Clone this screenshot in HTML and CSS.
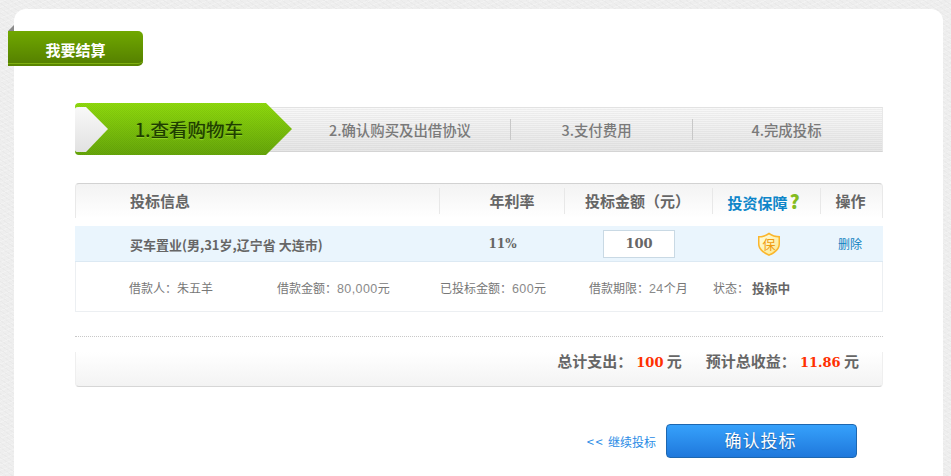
FILE: index.html
```html
<!DOCTYPE html>
<html lang="zh">
<head>
<meta charset="utf-8">
<title>我要结算</title>
<link rel="stylesheet" href="styles.css">
</head>
<body>
<main class="card">
  <h1 class="ribbon">我要结算</h1>
  <div class="content">
    <ol class="steps">
      <li class="step-active">
        <svg class="arrow" width="217" height="52" viewBox="0 0 217 52" aria-hidden="true">
          <defs>
            <linearGradient id="g" x1="0" y1="0" x2="0" y2="1">
              <stop offset="0" stop-color="#8fdb0d"/>
              <stop offset="1" stop-color="#66a60a"/>
            </linearGradient>
            <linearGradient id="w" x1="0" y1="0" x2="0" y2="1">
              <stop offset="0" stop-color="#f8f8f8"/>
              <stop offset="1" stop-color="#e2e2e2"/>
            </linearGradient>
            <pattern id="hatch" width="2" height="2" patternUnits="userSpaceOnUse">
              <rect width="1" height="1" fill="#000" fill-opacity=".05"/>
              <rect x="1" y="1" width="1" height="1" fill="#000" fill-opacity=".05"/>
            </pattern>
          </defs>
          <path d="M4 0H191L217 26 191 52H4Q0 52 0 48V4Q0 0 4 0Z" fill="url(#g)"/>
          <path d="M4 0H191L217 26 191 52H4Q0 52 0 48V4Q0 0 4 0Z" fill="url(#hatch)"/>
          <path d="M0 6Q0 4 3 4H11L33 26 11 49H3Q0 49 0 47Z" fill="url(#w)"/>
        </svg>
        <span class="step-active-text">1.查看购物车</span>
      </li>
      <li class="step step-2">2.确认购买及出借协议</li>
      <li class="step step-3">3.支付费用</li>
      <li class="step step-4">4.完成投标</li>
    </ol>

    <section class="table">
      <div class="thead">
        <div class="th th-info">投标信息</div>
        <div class="th th-rate">年利率</div>
        <div class="th th-amount">投标金额（元）</div>
        <div class="th th-guard">投资保障<b class="q">?</b></div>
        <div class="th th-op">操作</div>
      </div>
      <div class="row">
        <div class="cell-info">买车置业(男,31岁,辽宁省 大连市)</div>
        <div class="cell-rate">11%</div>
        <div class="cell-amount"><input class="amount" value="100" aria-label="投标金额"></div>
        <div class="cell-guard">
          <svg width="24" height="26" viewBox="0 0 24 26" aria-hidden="true">
            <defs>
              <linearGradient id="s" x1="0" y1="0" x2="1" y2="1">
                <stop offset="0" stop-color="#fffde0"/>
                <stop offset="1" stop-color="#fbe78a"/>
              </linearGradient>
            </defs>
            <path d="M12 1.5C15 4 19 5 23 5V13C23 19 17 23 12 25 7 23 1 19 1 13V5C5 5 9 4 12 1.5Z" fill="#fbb62c"/>
            <path d="M12 3.5C15 5.5 18 6.5 21.5 6.5V13C21.5 18 16 21.5 12 23.3 8 21.5 2.5 18 2.5 13V6.5C6 6.5 9 5.5 12 3.5Z" fill="url(#s)"/>
            <text x="12" y="18" text-anchor="middle" class="shield-text">保</text>
          </svg>
        </div>
        <div class="cell-op"><a class="del" href="#">删除</a></div>
      </div>
      <div class="detail">
        <span class="d d-1">借款人：朱五羊</span>
        <span class="d d-2">借款金额：<i class="num">80,000</i>元</span>
        <span class="d d-3">已投标金额：<i class="num">600</i>元</span>
        <span class="d d-4">借款期限：<i class="num">24</i>个月</span>
        <span class="d d-5">状态：<b class="status">投标中</b></span>
      </div>
    </section>

    <div class="dots"></div>

    <section class="summary">
      <span class="sum-item">总计支出：<b class="red">100</b> 元</span>
      <span class="sum-item">预计总收益：<b class="red">11.86</b> 元</span>
    </section>

    <div class="actions">
      <a class="back" href="#"><span class="back-arrows">&lt;&lt;</span> 继续投标</a>
      <button class="confirm" type="button">确认投标</button>
    </div>
  </div>
</main>
</body>
</html>
```
FILE: styles.css
```css
* { box-sizing: border-box; }
html, body { margin: 0; height: 476px; overflow: hidden; }
body {
  background:
    repeating-linear-gradient(35deg, #0000 0 3px, #00000005 3px 4px),
    repeating-linear-gradient(-20deg, #ffffff40 0 1px, #0000 1px 5px),
    #eeeeee;
  padding: 9px 8px 0 14px;
  font-family: "Noto Sans CJK SC", "Liberation Sans", sans-serif;
  color: #666;
}
.card {
  position: relative;
  width: 929px;
  height: 467px;
  background: #fff;
  border-radius: 12px 12px 0 0;
  padding-top: 22px;
}
.ribbon {
  position: relative;
  width: 135px;
  height: 35px;
  margin: 0 0 0 -6px;
  background: linear-gradient(#70a800, #558000);
  border-bottom: 2px solid #5a8500;
  box-shadow: inset 0 -1px 0 #7fb010;
  border-radius: 0 5px 5px 0;
  color: #fff;
  font-size: 15px;
  font-weight: 700;
  line-height: 38px;
  text-align: center;
}
.ribbon::before {
  content: "";
  position: absolute;
  left: 0;
  top: -6px;
  border-style: solid;
  border-width: 0 0 6px 6px;
  border-color: transparent transparent #8a8a8a transparent;
}
.content { padding: 37px 60px 0 61px; }

.steps {
  list-style: none;
  display: flex;
  align-items: center;
  height: 45px;
  margin: 4px 0 0;
  padding: 0;
  background: repeating-linear-gradient(#0000 0 1px, #0000000a 1px 2px), linear-gradient(#f8f8f8, #e6e6e6);
  border-top: 1px solid #e2e2e2;
  border-bottom: 1px solid #d4d4d4;
  border-right: 1px solid #e8e8e8;
}
.step-active {
  position: relative;
  flex: none;
  align-self: flex-start;
  width: 217px;
  height: 52px;
  margin: -5px 0 -4px;
  display: flex;
  align-items: center;
  padding-left: 60px;
}
.arrow { position: absolute; left: 0; top: 0; }
.step-active-text {
  position: relative;
  font-size: 18.5px;
  color: #1f3d00;
  text-shadow: 0 0 1px #2f5a00, 0 1px 1px #9fe030;
}
.step {
  height: 21px;
  line-height: 21px;
  font-size: 14.4px;
  font-weight: 500;
  color: #7a7a7a;
  text-align: center;
}
.step-2 { width: 218px; padding-right: 2px; }
.step-3, .step-4 { border-left: 1px solid #c8c8c8; }
.step-3 { width: 182px; padding-right: 10px; }
.step-4 { width: 190px; padding-right: 2px; }

.table { margin-top: 31px; }
.thead {
  display: flex;
  align-items: center;
  height: 35px;
  border: 1px solid #e9e9e9;
  border-top: 1px solid #d2d2d2;
  border-bottom: 0;
  border-radius: 4px 4px 0 0;
  background: linear-gradient(#f3f3f3, #fff);
  font-size: 15px;
  font-weight: 700;
}
.th { height: 26px; line-height: 26px; border-left: 1px solid #e8e8e8; text-align: center; }
.th-info { width: 363px; border-left: 0; padding-left: 54px; text-align: left; }
.th-rate { width: 125px; padding-left: 20px; }
.th-amount { width: 148px; padding-right: 2px; }
.th-guard { width: 108px; color: #0e86c9; padding-right: 6px; }
.q { color: #84bc20; font-size: 19px; margin-left: 2px; }
.th-op { flex: 1; padding-right: 2px; }

.row {
  display: flex;
  align-items: center;
  height: 36px;
  margin-top: 8px;
  background: #eaf5fd;
  border-bottom: 1px solid #dce9f3;
  font-size: 13px;
  font-weight: 700;
}
.cell-info { width: 365px; padding: 2px 0 0 55px; }
.cell-rate { width: 125px; text-align: center; font-family: "DejaVu Serif", serif; font-size: 12px; }
.cell-amount { width: 148px; display: flex; justify-content: center; }
.amount {
  width: 72px;
  height: 28px;
  border: 1px solid #c9d9e4;
  background: #fff;
  text-align: center;
  font: 700 13px "DejaVu Serif", serif;
  color: #666;
  padding: 0;
}
.cell-guard { width: 108px; display: flex; justify-content: center; padding-left: 4px; }
.shield-text { font-size: 13px; fill: #f09a10; font-weight: 400; font-family: "Noto Sans CJK SC", sans-serif; }
.cell-op { flex: 1; text-align: center; font-weight: 400; font-size: 12px; padding-right: 4px; }
.del { color: #0e7fc0; text-decoration: none; }

.detail {
  display: flex;
  align-items: center;
  height: 50px;
  border: 1px solid #eceff2;
  border-top: 0;
  padding-top: 2px;
  font-size: 12px;
  color: #777;
}
.d { flex: none; }
.d-1 { width: 201px; padding-left: 53px; }
.d-2 { width: 163px; }
.d-3 { width: 149px; }
.d-4 { width: 124px; }
.num { font-style: normal; font-family: "Liberation Sans", sans-serif; font-size: 12.5px; letter-spacing: .4px; color: #8a8a8a; }
.status { margin-left: 3px; color: #666; font-size: 12.7px; }

.dots { height: 1px; margin-top: 24px; border-top: 1px dotted #c8c8c8; }
.summary {
  display: flex;
  justify-content: flex-end;
  align-items: center;
  gap: 24px;
  height: 35px;
  margin-top: 15px;
  padding: 0 23px 17px 0;
  border: 1px solid #efefef;
  border-top: 0;
  border-bottom: 1px solid #d6d6d6;
  border-radius: 0 0 4px 4px;
  background: linear-gradient(#fff, #f3f3f3);
  font-size: 15px;
  font-weight: 700;
}
.red { color: #ff3000; font-family: "DejaVu Serif", serif; font-size: 13px; margin-left: 4px; }

.actions {
  display: flex;
  justify-content: flex-end;
  align-items: center;
  gap: 10px;
  margin-top: 37px;
  padding-right: 26px;
}
.back { color: #2a8ce6; font-size: 12px; text-decoration: none; }
.back-arrows { font-size: 13px; letter-spacing: 1.5px; margin-right: 1px; }
.confirm {
  width: 191px;
  height: 34px;
  border: 1px solid #1d67b0;
  border-radius: 4px;
  background: linear-gradient(#36a1fb, #1f78dc);
  color: #fff;
  font: 400 17px "Noto Sans CJK SC", sans-serif;
  letter-spacing: 1px;
  text-shadow: 0 1px 1px #1558a0;
  padding: 0 2px 3px 0;
}
```
